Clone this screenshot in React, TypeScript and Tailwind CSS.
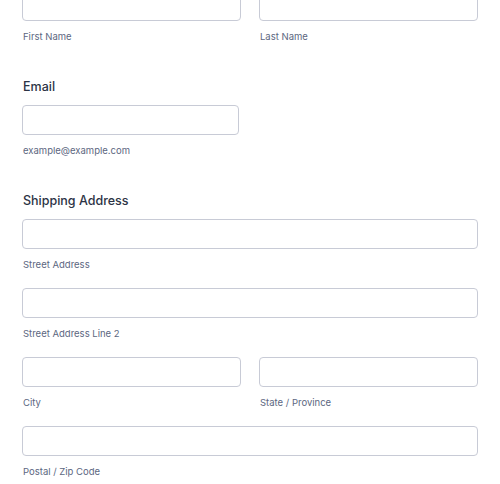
import React from 'react'

function Field({ label, className = '' }: { label: string; className?: string }) {
  return (
    <div className={`flex flex-col ${className}`}>
      <div className="h-[30px] rounded-[4px] border border-[#c8cbd6] bg-white" />
      <span className="mt-[9px] pl-px text-[9.5px] leading-[14px] text-[#5c6781]">{label}</span>
    </div>
  )
}

function Heading({ children }: { children: React.ReactNode }) {
  return (
    <h2 className="mb-[8px] pl-px pt-px text-[12.5px] font-medium leading-5 text-[#2c3345]">
      {children}
    </h2>
  )
}

export default function App() {
  return (
    <div
      className="h-[484px] w-[500px] overflow-hidden bg-white px-[22px]"
      style={{ fontFamily: 'Inter, "Noto Sans", sans-serif' }}
    >
      {/* Name row (scrolled partly out of view) */}
      <div className="-mt-[9px] grid grid-cols-2 gap-[18px]">
        <Field label="First Name" />
        <Field label="Last Name" />
      </div>

      {/* Email */}
      <div className="mt-[32px] w-[217px]">
        <Heading>Email</Heading>
        <Field label="example@example.com" />
      </div>

      {/* Shipping address */}
      <div className="mt-[32px]">
        <Heading>Shipping Address</Heading>
        <div className="flex flex-col gap-[16px]">
          <Field label="Street Address" />
          <Field label="Street Address Line 2" />
          <div className="grid grid-cols-2 gap-[18px]">
            <Field label="City" />
            <Field label="State / Province" />
          </div>
          <Field label="Postal / Zip Code" />
        </div>
      </div>
    </div>
  )
}
